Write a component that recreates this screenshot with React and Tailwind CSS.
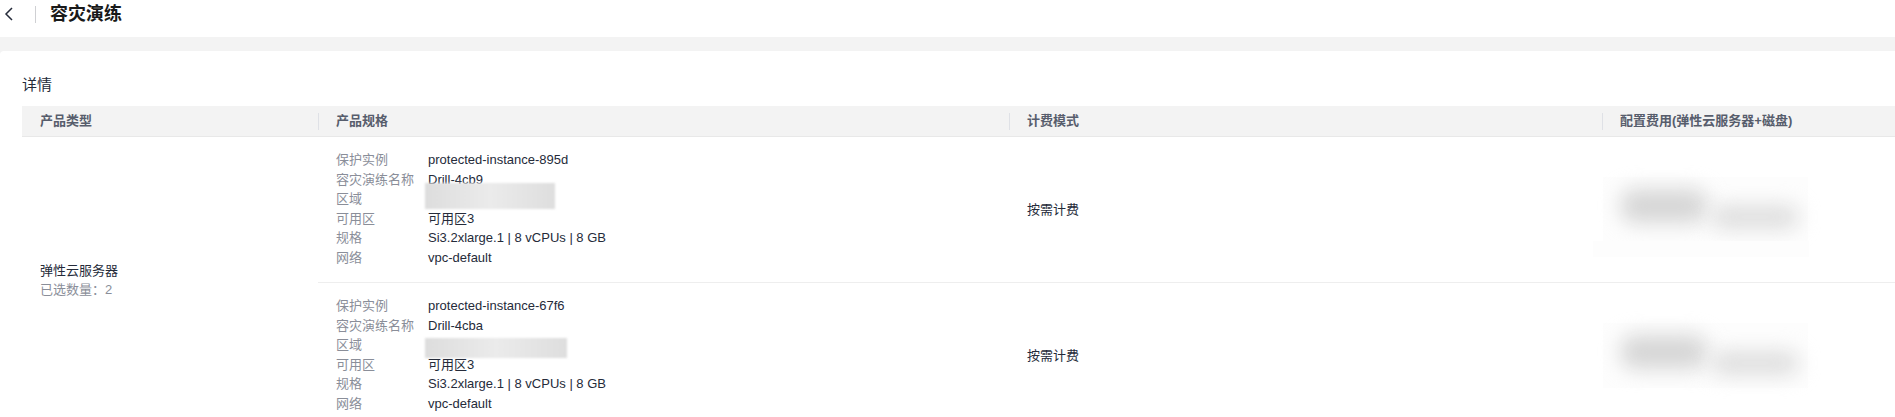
import React from "react";

const instances = [
  {
    id: "protected-instance-895d",
    drill: "Drill-4cb9",
    region: { w: "w-[130px]", h: "h-[26px]", top: "top-[-6px]" },
    az: "可用区3",
    flavor: "Si3.2xlarge.1 | 8 vCPUs | 8 GB",
    vpc: "vpc-default",
  },
  {
    id: "protected-instance-67f6",
    drill: "Drill-4cba",
    region: { w: "w-[142px]", h: "h-[20px]", top: "top-[3px]" },
    az: "可用区3",
    flavor: "Si3.2xlarge.1 | 8 vCPUs | 8 GB",
    vpc: "vpc-default",
  },
];

function BackIcon() {
  return (
    <svg width="12" height="14" viewBox="0 0 12 14" className="ml-[3px]">
      <path d="M9 1 L3 7 L9 13" fill="none" stroke="#252b3a" strokeWidth="1.5" />
    </svg>
  );
}

function HeadCell({ width, text, first }) {
  return (
    <div className={`flex items-center ${width}`}>
      {!first && <span className="w-px h-[17px] bg-[#dfe1e6]" />}
      <span className={`text-[13px] font-semibold text-[#575d6c] ${first ? "pl-[18px]" : "pl-[17px]"}`}>
        {text}
      </span>
    </div>
  );
}

function Spec({ label, children }) {
  return (
    <>
      <span className="text-[#8a8e99]">{label}</span>
      <span className="text-[#252b3a] relative">{children}</span>
    </>
  );
}

function BlurredPrice({ cover }) {
  return (
    <div className="relative w-[205px] h-[65px] bg-[#fdfdfd]">
      {cover && <div className="absolute left-[-10px] top-[-82px] w-[216px] h-[16px] bg-[#fdfdfd]" />}
      <div className="absolute left-[18px] top-[12px] w-[86px] h-[34px] rounded-[14px] bg-[#d6d6d6] blur-[10px]" />
      <div className="absolute left-[108px] top-[28px] w-[88px] h-[24px] rounded-[12px] bg-[#dedede] blur-[10px]" />
    </div>
  );
}

export default function App() {
  return (
    <div className="w-[1895px] h-[417px] overflow-hidden bg-white font-['Liberation_Sans','Noto_Sans_CJK_SC',sans-serif]">
      <div className="h-[37px]">
        <div className="h-[28px] flex items-center">
          <BackIcon />
          <span className="ml-[20px] w-px h-[17px] bg-[#cfd0d3]" />
          <h1 className="ml-[14px] text-[18px] font-bold text-[#191919]">容灾演练</h1>
        </div>
      </div>

      <div className="bg-[#f3f3f3] pt-[14px]">
        <div className="bg-white rounded-tl-[4px] pl-[22px] pt-[24px] h-[366px]">
          <h2 className="text-[15px] leading-[20px] text-[#252b3a] mb-[11px]">详情</h2>

          <div className="flex h-[31px] bg-[#f3f3f3] border-b border-[#e8e8e8]">
            <HeadCell width="w-[296px]" text="产品类型" first />
            <HeadCell width="w-[691px]" text="产品规格" />
            <HeadCell width="w-[593px]" text="计费模式" />
            <HeadCell width="flex-1" text="配置费用(弹性云服务器+磁盘)" />
          </div>

          <div className="flex text-[13px] leading-[19.5px]">
            <div className="w-[296px] flex flex-col justify-center pl-[18px] pb-[6px]">
              <span className="text-[#252b3a]">弹性云服务器</span>
              <span className="text-[#8a8e99]">已选数量：2</span>
            </div>

            <div className="flex-1 flex flex-col">
              {instances.map((item, i) => (
                <div key={item.id} className="flex border-b border-[#eeeeee]">
                  <div className="w-[691px] pl-[18px] pt-[13px] pb-[15px]">
                    <div className="grid grid-cols-[92px_1fr]">
                      <Spec label="保护实例">{item.id}</Spec>
                      <Spec label="容灾演练名称">{item.drill}</Spec>
                      <Spec label="区域">
                        <span
                          className={`absolute left-[-3px] ${item.region.top} ${item.region.w} ${item.region.h} bg-linear-to-r from-[#dddddd] via-[#ebebeb] to-[#dedede] blur-[1px]`}
                        />
                        &nbsp;
                      </Spec>
                      <Spec label="可用区">{item.az}</Spec>
                      <Spec label="规格">{item.flavor}</Spec>
                      <Spec label="网络">{item.vpc}</Spec>
                    </div>
                  </div>
                  <div className="w-[593px] flex items-center pl-[18px] text-[#252b3a]">按需计费</div>
                  <div className="flex-1 flex items-center pl-[1px]">
                    <BlurredPrice cover={i === 1} />
                  </div>
                </div>
              ))}
            </div>
          </div>
        </div>
      </div>
    </div>
  );
}
